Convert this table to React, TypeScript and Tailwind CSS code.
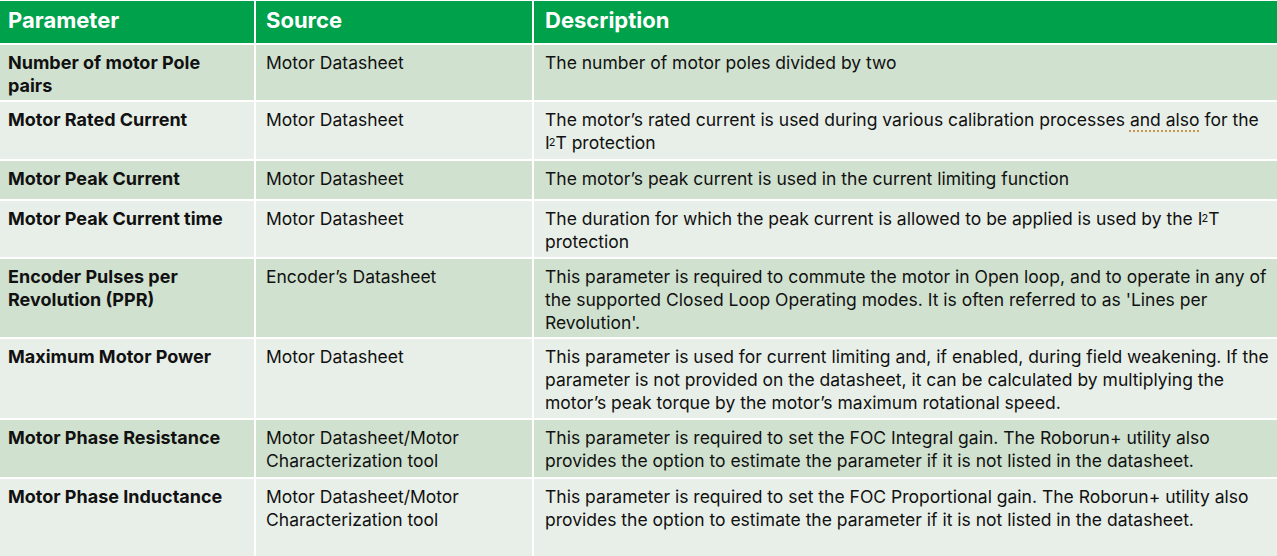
import React from "react";

type Row = {
  param: React.ReactNode;
  source: React.ReactNode;
  desc: React.ReactNode;
  h: string;
  dark: boolean;
};

const I2T = (
  <>
    I<sup className="text-[11px] relative -top-[3px] -ml-[1px]">2</sup>T
  </>
);

const rows: Row[] = [
  {
    param: (
      <>
        Number of motor Pole
        <br />
        pairs
      </>
    ),
    source: "Motor Datasheet",
    desc: "The number of motor poles divided by two",
    h: "h-[55px]",
    dark: true,
  },
  {
    param: "Motor Rated Current",
    source: "Motor Datasheet",
    desc: (
      <>
        The motor’s rated current is used during various calibration processes{" "}
        <span className="underline decoration-dotted decoration-[#c8964a] decoration-2 underline-offset-4">
          and also
        </span>{" "}
        for the
        <br />
        {I2T} protection
      </>
    ),
    h: "h-[57px]",
    dark: false,
  },
  {
    param: "Motor Peak Current",
    source: "Motor Datasheet",
    desc: "The motor’s peak current is used in the current limiting function",
    h: "h-[38px]",
    dark: true,
  },
  {
    param: "Motor Peak Current time",
    source: "Motor Datasheet",
    desc: (
      <>
        The duration for which the peak current is allowed to be applied is used by the {I2T}
        <br />
        protection
      </>
    ),
    h: "h-[56px]",
    dark: false,
  },
  {
    param: (
      <>
        Encoder Pulses per
        <br />
        Revolution (PPR)
      </>
    ),
    source: "Encoder’s Datasheet",
    desc: (
      <>
        This parameter is required to commute the motor in Open loop, and to operate in any of
        <br />
        the supported Closed Loop Operating modes. It is often referred to as 'Lines per
        <br />
        Revolution'.
      </>
    ),
    h: "h-[78px]",
    dark: true,
  },
  {
    param: "Maximum Motor Power",
    source: "Motor Datasheet",
    desc: (
      <>
        This parameter is used for current limiting and, if enabled, during field weakening. If the
        <br />
        parameter is not provided on the datasheet, it can be calculated by multiplying the
        <br />
        motor’s peak torque by the motor’s maximum rotational speed.
      </>
    ),
    h: "h-[79px]",
    dark: false,
  },
  {
    param: "Motor Phase Resistance",
    source: (
      <>
        Motor Datasheet/Motor
        <br />
        Characterization tool
      </>
    ),
    desc: (
      <>
        This parameter is required to set the FOC Integral gain. The Roborun+ utility also
        <br />
        provides the option to estimate the parameter if it is not listed in the datasheet.
      </>
    ),
    h: "h-[57px]",
    dark: true,
  },
  {
    param: "Motor Phase Inductance",
    source: (
      <>
        Motor Datasheet/Motor
        <br />
        Characterization tool
      </>
    ),
    desc: (
      <>
        This parameter is required to set the FOC Proportional gain. The Roborun+ utility also
        <br />
        provides the option to estimate the parameter if it is not listed in the datasheet.
      </>
    ),
    h: "h-[80px]",
    dark: false,
  },
];

export default function App() {
  return (
    <div
      className="w-[1277px] h-[556px] overflow-hidden bg-white pt-[1px] text-[17.5px] leading-[23px] text-[#111]"
      style={{ fontFamily: "Inter, 'Open Sans', sans-serif" }}
    >
      <div className="grid grid-cols-[254px_276px_1fr] gap-[2px]">
        <div className="h-[42px] bg-[#00a14b] px-[8px] pt-[8px] text-[22px] font-bold text-white">Parameter</div>
        <div className="h-[42px] bg-[#00a14b] px-[10px] pt-[8px] text-[22px] font-bold text-white">Source</div>
        <div className="h-[42px] bg-[#00a14b] px-[11px] pt-[8px] text-[22px] font-bold text-white">Description</div>
        {rows.map((r, i) => {
          const bg = r.dark ? "bg-[#d0e1cf]" : "bg-[#e8efe8]";
          return (
            <React.Fragment key={i}>
              <div className={`${r.h} ${bg} whitespace-nowrap px-[8px] pt-[6px] text-[18px] font-bold`}>{r.param}</div>
              <div className={`${r.h} ${bg} whitespace-nowrap px-[10px] pt-[6px]`}>{r.source}</div>
              <div className={`${r.h} ${bg} whitespace-nowrap pl-[11px] pr-[4px] pt-[6px]`}>{r.desc}</div>
            </React.Fragment>
          );
        })}
      </div>
    </div>
  );
}
